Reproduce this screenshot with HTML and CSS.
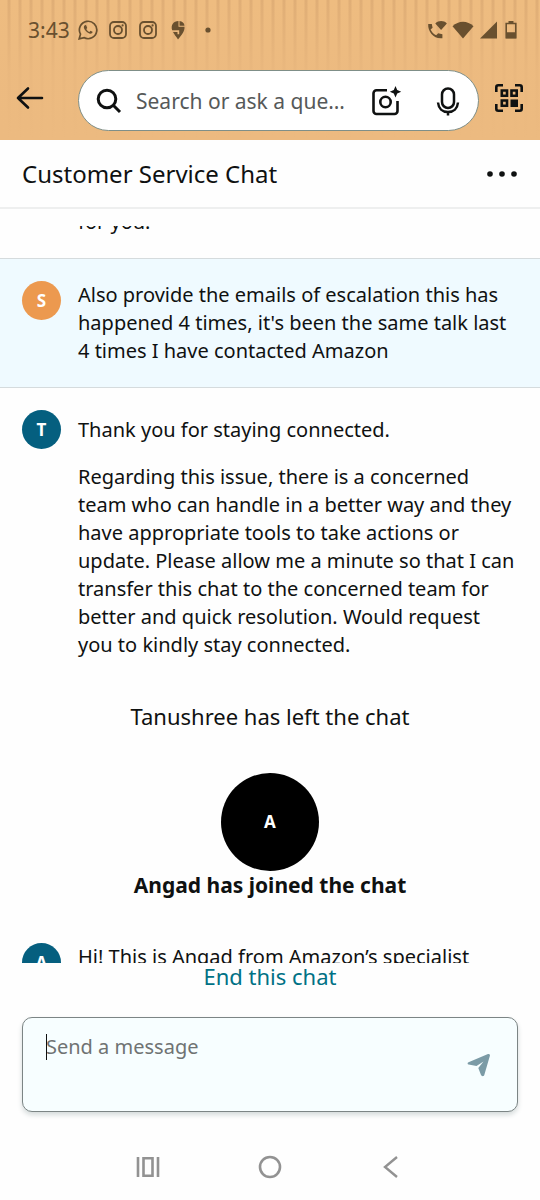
FILE: index.html
```html
<!DOCTYPE html>
<html lang="en">
<head>
<meta charset="utf-8">
<meta name="viewport" content="width=device-width, initial-scale=1">
<title>Customer Service Chat</title>
<link rel="stylesheet" href="styles.css">
</head>
<body>
<header class="top">
  <div class="status">
    <div class="status-left">
      <span class="clock">3:43</span>
      <svg class="s20" viewBox="0 0 20 20" fill="none" stroke="currentColor" stroke-width="1.7"><path d="M1.2 18.8l1.300-4.600A8.700 8.700 0 1 1 5.900 17.600z"/><path d="M6.800 5.200c-1.600 1-1.100 3.200.6 5.200 2 2.400 4.700 4.100 6.400 2.900.6-.4.9-1.100.7-1.500l-2-1.100-1.100 1.200c-1.500-.6-2.500-1.600-3.100-2.900l.9-1-.9-2.400c-.3-.6-.9-.8-1.500-.4z" fill="currentColor" stroke="none"/></svg>
      <svg class="s20" viewBox="0 0 20 20" fill="none" stroke="currentColor" stroke-width="1.800"><rect x="2" y="2" width="16" height="16" rx="4"/><circle cx="10" cy="10" r="4"/><circle cx="14.600" cy="5.400" r="1.100" fill="currentColor" stroke="none"/></svg>
      <svg class="s20" viewBox="0 0 20 20" fill="none" stroke="currentColor" stroke-width="1.800"><rect x="2" y="2" width="16" height="16" rx="4"/><circle cx="10" cy="10" r="4"/><circle cx="14.600" cy="5.400" r="1.100" fill="currentColor" stroke="none"/></svg>
      <svg class="s20" viewBox="0 0 20 20"><path d="M10 19.500C8 16.500 6 14 5 12h4.500v2.200h1.700V10.300H4.200C2.500 5 5.500 1 10.500 1V6.800h6C16.800 11.500 14 14.500 10 19.500zM11.500 1.100c2.800.3 4.800 2 5 4.600h-5z" fill="currentColor"/></svg>
      <svg class="s20" viewBox="0 0 20 20"><circle cx="10" cy="10" r="2.600" fill="currentColor"/></svg>
    </div>
    <div class="status-right">
      <svg class="s20" viewBox="0 0 20 20" fill="currentColor"><path d="M1.200 4h3.600l.8 3.800-2 1.700c1.200 2.600 3 4.600 5.600 5.800l2-2 4.200 1v3.900C7.500 19.500.5 12 1.200 4z"/><path d="M8.300 3.400c3.400-3.200 8.300-3.200 11.600 0L14.100 10z"/></svg>
      <svg class="wifi" viewBox="0 0 22 20" fill="currentColor"><path d="M.5 6.200C6.500.2 15.500.2 21.500 6.200L11 18.500z"/></svg>
      <svg class="s20" viewBox="0 0 20 20" fill="currentColor"><path d="M18 1.500V18.500H1z"/></svg>
      <svg class="battery" viewBox="0 0 14 20"><path d="M2.200 3.500h9.600v14.300H2.200z" fill="none" stroke="currentColor" stroke-width="1.600"/><path d="M4.500 1h5v2h-5zM2 12.200h10v6H2z" fill="currentColor"/></svg>
    </div>
  </div>
  <div class="search-row">
    <button class="icon-btn back" aria-label="Back"><svg viewBox="0 0 28 28" fill="none" stroke="currentColor" stroke-width="2.600" stroke-linecap="round" stroke-linejoin="round"><path d="M26 14H2M12 4.500L2 14l10 9.500"/></svg></button>
    <form class="search">
      <svg class="glass" viewBox="0 0 28 28" fill="none" stroke="currentColor" stroke-width="3"><circle cx="12" cy="12" r="8.800"/><path d="M18 18l7 7"/></svg>
      <input class="search-input" type="text" aria-label="Search" placeholder="Search or ask a que…">
      <button class="icon-btn camera" type="button" aria-label="Camera search"><svg viewBox="0 0 32 32" fill="none" stroke="currentColor" stroke-width="2.600"><path d="M17 5.300H6.500a3 3 0 0 0-3 3V26a3 3 0 0 0 3 3h18a3 3 0 0 0 3-3V16"/><circle cx="15.500" cy="17" r="5.200"/><path d="M25.500 1l1.700 4 4 1.700-4 1.700-1.700 4-1.700-4-4-1.700 4-1.700z" fill="currentColor" stroke="none"/></svg></button>
      <button class="icon-btn mic" type="button" aria-label="Voice search"><svg viewBox="0 0 28 32" fill="none" stroke="currentColor" stroke-width="2.500"><rect x="8" y="3.500" width="12" height="19.500" rx="6"/><path d="M4 17.500C4.500 23.500 8.500 27 14 27s9.500-3.500 10-9.500M14 27v3.500"/></svg></button>
    </form>
    <button class="icon-btn scan" aria-label="Scan code"><svg viewBox="0 0 30 30" fill="none" stroke="currentColor" stroke-width="2.600"><path d="M2.300 9V4.300a2 2 0 0 1 2-2H9M21 2.300h4.700a2 2 0 0 1 2 2V9M27.700 21v4.700a2 2 0 0 1-2 2H21M9 27.700H4.300a2 2 0 0 1-2-2V21"/><path d="M7.800 7.500h5.200v5.200H7.800zM17.500 7.500h5.200v5.200h-5.200zM7.800 17.500h5.200v5.200H7.800z"/><path d="M16.500 16.500h7.500v7.500h-7.500z" fill="currentColor" stroke="none"/></svg></button>
  </div>
</header>
<section class="title-bar">
  <h1 class="title">Customer Service Chat</h1>
  <button class="icon-btn more" aria-label="More options"><svg viewBox="0 0 32 8" fill="currentColor"><circle cx="4" cy="4" r="2.800"/><circle cx="16" cy="4" r="2.800"/><circle cx="28" cy="4" r="2.800"/></svg></button>
</section>
<main class="chat">
  <div class="message earlier"><div class="text"><p>for you.</p></div></div>
  <div class="message customer">
    <span class="avatar">S</span>
    <div class="text"><p>Also provide the emails of escalation this has<br>happened 4 times, it's been the same talk last<br>4 times I have contacted Amazon</p></div>
  </div>
  <div class="message agent">
    <span class="avatar">T</span>
    <div class="text reply">
      <p>Thank you for staying connected.</p>
      <p>Regarding this issue, there is a concerned<br>team who can handle in a better way and they<br>have appropriate tools to take actions or<br>update. Please allow me a minute so that I can<br>transfer this chat to the concerned team for<br>better and quick resolution. Would request<br>you to kindly stay connected.</p>
    </div>
  </div>
  <p class="notice">Tanushree has left the chat</p>
  <div class="joined">
    <span class="avatar large">A</span>
    <p class="joined-text">Angad has joined the chat</p>
  </div>
  <div class="message agent">
    <span class="avatar">A</span>
    <div class="text"><p>Hi! This is Angad from Amazon’s specialist</p></div>
  </div>
</main>
<footer class="bottom">
  <button class="end">End this chat</button>
  <form class="composer">
    <textarea class="composer-input" rows="2" aria-label="Message" placeholder="Send a message"></textarea>
    <button class="icon-btn send" type="button" aria-label="Send"><svg viewBox="0 0 24 24" fill="currentColor"><path d="M1.500 9.200L21 1.100c1.300-.4 2.200.4 1.900 1.700L17.300 22c-.5 1.500-2.700 1.600-3.300.1L11.300 15l5.200-6.500L9.500 13 1.600 11.500C.3 11.200.3 9.700 1.500 9.200z"/></svg></button>
    <span class="caret"></span>
  </form>
  <nav class="nav">
    <button class="icon-btn" aria-label="Recent apps"><svg viewBox="0 0 24 24" fill="none" stroke="currentColor" stroke-width="2.600"><path d="M2 2v20M22 2v20M7.500 3.300h9v17.400h-9z"/></svg></button>
    <button class="icon-btn" aria-label="Home"><svg viewBox="0 0 24 24" fill="none" stroke="currentColor" stroke-width="2.600"><circle cx="12" cy="12" r="10"/></svg></button>
    <button class="icon-btn" aria-label="Back"><svg viewBox="0 0 24 24" fill="none" stroke="currentColor" stroke-width="2.400"><path d="M17 2L5 12l12 10"/></svg></button>
  </nav>
</footer>
</body>
</html>
```
FILE: styles.css
```css
* { box-sizing: border-box; }
body {
  margin: 0;
  height: 100vh;
  display: flex;
  flex-direction: column;
  background: #fefefe;
  color: #0f1111;
  font: 20px/28px "Noto Sans", sans-serif;
}
p, h1 { margin: 0; }
svg { display: block; width: 100%; height: 100%; }
button, input, textarea { font: inherit; color: inherit; border: 0; background: none; padding: 0; margin: 0; outline: 0; }
.icon-btn { flex: none; width: 24px; height: 24px; }

.top {
  flex: none;
  height: 140px;
  background:
    linear-gradient(rgba(236, 186, 128, 0), rgba(236, 186, 128, 0.8) 50%, #ecba80),
    repeating-linear-gradient(90deg, #eebc80 0 7px, #e0ae76 8px 10px, #eebc80 11px);
}
.status {
  display: flex;
  justify-content: space-between;
  height: 60px;
  padding: 0 22px 0 28px;
  align-items: center;
  color: #69502f;
}
.status-left, .status-right { display: flex; align-items: center; }
.status-left { gap: 10px; }
.status-right { gap: 5px; }
.clock { margin-right: -2px; font-size: 21px; }
.s20 { width: 20px; height: 20px; }
.wifi { width: 22px; height: 20px; }
.battery { width: 14px; height: 20px; }
.search-row {
  display: flex;
  align-items: center;
  padding: 10px 16px 0;
}
.back { width: 28px; height: 28px; margin-bottom: 5px; }
.search {
  flex: 1;
  min-width: 0;
  display: flex;
  align-items: center;
  height: 61px;
  margin: 0 15px 0 34px;
  padding: 0 16px;
  border: 1px solid #7f8f88;
  border-radius: 31px;
  background: #fff;
}
.glass { flex: none; width: 28px; height: 28px; }
.search-input { flex: 1; min-width: 0; margin: 0 16px 0 13px; height: 32px; font-size: 21px; text-overflow: ellipsis; }
.search-input::placeholder { color: #565959; opacity: 1; }
.camera { width: 32px; height: 32px; }
.mic { width: 28px; height: 32px; margin-left: 32px; }
.scan { width: 30px; height: 30px; margin-bottom: 5px; }

.title-bar {
  flex: none;
  display: flex;
  align-items: center;
  justify-content: space-between;
  height: 69px;
  padding: 0 22px;
  border-bottom: 2px solid #eeefef;
}
.title { font-size: 24px; line-height: 32px; font-weight: 400; }
.more { width: 32px; height: 8px; }

.chat { flex: 1; min-height: 0; overflow: hidden; margin-top: 17px; }
.message { display: flex; gap: 17px; padding: 22px 16px 0 22px; }
.earlier { padding: 0 16px 22px 78px; margin-top: -18px; }
.avatar {
  flex: none;
  display: grid;
  place-items: center;
  width: 39px;
  height: 39px;
  border-radius: 50%;
  background: #055f7f;
  color: #fff;
  font-size: 17px;
  font-weight: 700;
}
.text { white-space: nowrap; }
.text p + p { margin-top: 19px; }
.customer { padding-bottom: 22px; background: #effaff; border: solid #d5dbdd; border-width: 1px 0; }
.customer .avatar { background: #ec994f; }
.reply { padding-top: 6px; }
.notice { margin-top: 43px; text-align: center; font-size: 22px; }
.joined { display: flex; flex-direction: column; align-items: center; margin-top: 43px; margin-bottom: 22px; }
.joined-text { font-size: 21px; font-weight: 700; }
.avatar.large { width: 98px; height: 98px; background: #000; }

.bottom { flex: none; padding: 0 22px; }
.end { display: block; margin: 0 auto; color: #007185; font-size: 22px; line-height: 26px; }
.composer {
  position: relative;
  display: flex;
  align-items: center;
  height: 95px;
  margin-top: 28px;
  padding: 0 26px 0 23px;
  border: 1px solid #7c8585;
  border-radius: 10px;
  background: #f7feff;
  box-shadow: 0 3px 5px #d5dbdb;
}
.composer-input { flex: 1; min-width: 0; height: 64px; resize: none; }
.composer-input::placeholder { color: #6f7373; opacity: 1; }
.send { color: #7b9ba6; }
.caret { position: absolute; left: 23px; top: 16px; width: 1px; height: 26px; background: #0f1111; }
.nav {
  display: flex;
  justify-content: center;
  gap: 98px;
  padding: 43px 0 21px;
  color: #929292;
}
```
